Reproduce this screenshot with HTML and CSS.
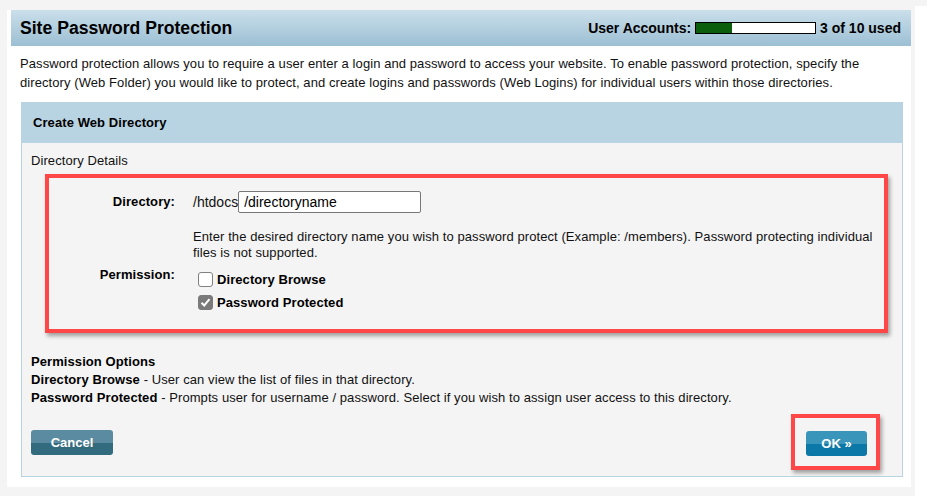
FILE: index.html
```html
<!DOCTYPE html>
<html lang="en">

<head>
    <meta charset="UTF-8">
    <title>Site Password Protection</title>
    <link rel="stylesheet" href="styles.css">
</head>

<body>

    <div class="wrap">

        <div class="panel">

            <div class="title-bar">
                <h1>Site Password Protection</h1>
                <div class="usage">
                    <span>User Accounts:</span>
                    <div class="meter"><div class="meter-fill" style="width: 30%"></div></div>
                    <span>3 of 10 used</span>
                </div>
            </div>

            <p class="intro">Password protection allows you to require a user enter a login and password to access your website. To enable password protection, specify the directory (Web Folder) you would like to protect, and create logins and passwords (Web Logins) for individual users within those directories.</p>

            <div class="box">
                <div class="box-head">Create Web Directory</div>
                <div class="box-body">

                    <div class="section-title">Directory Details</div>

                    <div class="highlight form">
                        <div class="label dir-label">Directory:</div>
                        <div class="dir-field">
                            <span class="prefix">/htdocs</span>
                            <input type="text" class="dir-input" value="/directoryname">
                        </div>

                        <div></div>
                        <div class="help">Enter the desired directory name you wish to password protect (Example: /members). Password protecting individual files is not supported.</div>

                        <div class="label perm-label">Permission:</div>
                        <div class="perms">
                            <label class="perm">
                                <span class="check"></span>
                                Directory Browse
                            </label>
                            <label class="perm">
                                <span class="check on">
                                    <svg width="15" height="15" viewBox="0 0 15 15">
                                        <path d="M3.5 7.8 L6.2 10.5 L11.5 4.2" fill="none" stroke="#fff" stroke-width="2"/>
                                    </svg>
                                </span>
                                Password Protected
                            </label>
                        </div>
                    </div>

                    <div class="options">
                        <b>Permission Options</b><br>
                        <b>Directory Browse</b> - User can view the list of files in that directory.<br>
                        <b>Password Protected</b> - Prompts user for username / password. Select if you wish to assign user access to this directory.
                    </div>

                    <div class="actions">
                        <button class="btn cancel">Cancel</button>
                        <div class="highlight ok-wrap">
                            <button class="btn ok">OK &raquo;</button>
                        </div>
                    </div>

                </div>
            </div>

        </div>

        <div class="side"></div>

    </div>

</body>

</html>
```

FILE: styles.css
```css
* {
    box-sizing: border-box;
}

html,
body {
    margin: 0;
    background-color: #f4f4f4;
    font-family: "Liberation Sans", Arial, sans-serif;
    font-size: 13px;
    letter-spacing: 0.08px;
    color: #111;
}

.wrap {
    display: flex;
    align-items: flex-start;
}

.panel {
    margin: 10px 0 0 7px;
    width: 904px;
    padding: 0 0 10px 4px;
    background-color: #fff;
}

.side {
    margin: 6px 0 0 4px;
    flex: 1;
    height: 490px;
    background-color: #fff;
}

.title-bar {
    height: 36px;
    display: flex;
    align-items: center;
    justify-content: space-between;
    padding: 0 10px 0 9px;
    background: linear-gradient(#cadfea, #9cbfd4);
}

.title-bar h1 {
    margin: 0;
    font-size: 17.6px;
    font-weight: bold;
    letter-spacing: 0;
    color: #000;
}

.usage {
    display: flex;
    align-items: center;
    gap: 4px;
    font-size: 14px;
    font-weight: bold;
    letter-spacing: 0;
    color: #000;
}

.meter {
    width: 121px;
    height: 12px;
    border: 1px solid #000;
    background-color: #fff;
}

.meter-fill {
    height: 100%;
    background-color: #0b5e0b;
}

.intro {
    margin: 8px 10px 10px 9px;
    line-height: 19px;
}

.box {
    margin: 0 8px 0 10px;
    border: 1px solid #b8d4e2;
}

.box-head {
    height: 40px;
    line-height: 40px;
    padding: 0 11px;
    background-color: #b8d4e2;
    font-weight: bold;
    color: #000;
}

.box-body {
    padding: 9px 9px 6px 9px;
    background-color: #f4f4f4;
}

.section-title {
    line-height: 18px;
}

.highlight {
    border: 4px solid #ff4747;
    box-shadow: 2px 3px 4px rgba(0, 0, 0, 0.35);
}

.form {
    margin: 4px 5px 0 14px;
    padding: 13px 8px 15px 0;
    display: grid;
    grid-template-columns: 126px 1fr;
    column-gap: 18px;
}

.label {
    text-align: right;
    font-weight: bold;
    color: #000;
}

.dir-label {
    line-height: 22px;
}

.dir-field {
    display: flex;
    align-items: center;
    font-size: 14px;
    letter-spacing: 0;
}

.prefix {
    color: #111;
}

.dir-input {
    width: 183px;
    height: 22px;
    margin: 0;
    padding: 0 5px;
    border: 1px solid #777;
    border-radius: 2px;
    font-family: "Liberation Sans", Arial, sans-serif;
    font-size: 14px;
    color: #000;
}

.help {
    margin-top: 16px;
    line-height: 16px;
}

.perm-label {
    padding-top: 6px;
}

.perms {
    padding-top: 7px;
}

.perm {
    display: flex;
    align-items: center;
    gap: 4px;
    height: 23px;
    padding-left: 5px;
    font-weight: bold;
    color: #000;
}

.check {
    width: 15px;
    height: 15px;
    border: 1px solid #808080;
    border-radius: 3px;
    background-color: #fff;
}

.check.on {
    border-color: #7a7a7a;
    background-color: #7a7a7a;
}

.check svg {
    display: block;
    margin: -1px;
}

.options {
    margin-top: 20px;
    line-height: 18px;
}

.options b {
    color: #000;
}

.actions {
    margin-top: 7px;
    display: flex;
    justify-content: space-between;
    align-items: center;
}

.btn {
    height: 25px;
    border: 0;
    border-radius: 3px;
    font-family: "Liberation Sans", Arial, sans-serif;
    font-size: 13px;
    font-weight: bold;
    color: #fff;
    cursor: pointer;
}

.cancel {
    width: 82px;
    background: linear-gradient(#5a8ba0 50%, #326a7e 50%);
}

.ok-wrap {
    margin-right: 13px;
    padding: 13px 9px 10px 11px;
}

.ok {
    display: block;
    width: 61px;
    background: linear-gradient(#3a95bb 50%, #0c78a7 50%);
}
```
